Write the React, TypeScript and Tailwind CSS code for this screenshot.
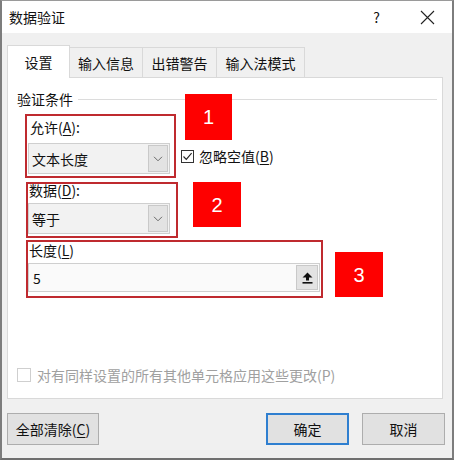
import React from "react";

const Chevron = () => (
  <svg width="10" height="6" viewBox="0 0 10 6">
    <path d="M1 0.8 L5 4.8 L9 0.8" fill="none" stroke="#6a6a6a" strokeWidth="1" />
  </svg>
);

function Combo({ text }: { text: string }) {
  return (
    <div className="flex h-[31px] w-[142px] items-stretch border border-[#cfcfcf] bg-[#f2f2f2]">
      <div className="flex flex-1 items-center pl-[3px] text-[14px] leading-[16px] text-[#111]">{text}</div>
      <div className="my-[1px] mr-[1px] flex w-[20px] items-center justify-center border border-[#c9c9c9] bg-[#e3e3e3]">
        <Chevron />
      </div>
    </div>
  );
}

function RedTag({ n, cls }: { n: string; cls: string }) {
  return (
    <div className={"absolute flex items-center justify-center bg-[#fe0000] font-['Liberation_Sans',Arial,sans-serif] text-[20px] leading-none text-white " + cls}>
      {n}
    </div>
  );
}

export default function App() {
  return (
    <div className="h-[461px] w-[455px] bg-white font-['Noto_Sans_CJK_SC','Noto_Sans',sans-serif] text-[#111]">
      <div className="flex h-[460px] w-[454px] flex-col border-x-2 border-t border-b-2 border-x-[#7d7d7d] border-t-[#9a9a9a] border-b-[#6f6f6f]">
        {/* title bar */}
        <div className="flex h-[32px] items-center bg-white pl-[7px]">
          <span className="text-[14px] leading-[16px]">数据验证</span>
          <span className="ml-auto text-[14px] leading-[16px]">?</span>
          <div className="ml-[40px] mr-[17px] flex items-center">
            <svg width="15" height="15" viewBox="0 0 15 15">
              <path d="M1 1 L14 14 M14 1 L1 14" stroke="#222" strokeWidth="1.1" />
            </svg>
          </div>
        </div>
        {/* body */}
        <div className="flex flex-1 flex-col bg-[#f0f0f0] pl-[5px] pr-[7px]">
          {/* tabs */}
          <div className="mt-[12px] flex h-[32px] items-end">
            <div className="relative z-10 -mb-px flex h-[33px] w-[63px] items-center justify-center border-x border-t border-[#d9d9d9] bg-white text-[14px] leading-[16px]">
              设置
            </div>
            <div className="flex h-[30px] w-[73px] items-center justify-center border-r border-t border-[#d9d9d9] text-[14px] leading-[16px]">
              输入信息
            </div>
            <div className="flex h-[30px] w-[74px] items-center justify-center border-r border-t border-[#d9d9d9] text-[14px] leading-[16px]">
              出错警告
            </div>
            <div className="flex h-[30px] w-[88px] items-center justify-center border-r border-t border-[#d9d9d9] text-[14px] leading-[16px]">
              输入法模式
            </div>
          </div>
          {/* panel */}
          <div className="relative flex h-[322px] w-[436px] flex-col border border-[#d9d9d9] bg-white">
            <div className="mt-[11px] flex h-[20px] items-center pl-[9px] pr-[5px]">
              <span className="text-[14px] leading-[16px]">验证条件</span>
              <div className="ml-[5px] h-px flex-1 bg-[#dcdcdc]" />
            </div>

            {/* row 1 */}
            <div className="mt-[5px] flex items-end">
              <div className="ml-[17px] flex h-[64px] w-[151px] flex-col border-2 border-[#bf2a2f]">
                <div className="flex h-[22px] items-center pl-[3px] text-[14px] leading-[16px]">
                  允许(<u className="underline-offset-2">A</u>):
                </div>
                <div className="ml-px mt-[5px]">
                  <Combo text="文本长度" />
                </div>
              </div>
              <div className="mb-[14px] ml-[5px] flex items-center">
                <div className="flex h-[13px] w-[13px] items-center justify-center border border-[#333] bg-white">
                  <svg width="11" height="11" viewBox="0 0 11 11">
                    <path d="M1.5 5.5 L4.3 8.4 L9.6 2.2" fill="none" stroke="#222" strokeWidth="1.1" />
                  </svg>
                </div>
                <span className="ml-[5px] text-[14px] leading-[16px]">
                  忽略空值(<u className="underline-offset-2">B</u>)
                </span>
              </div>
            </div>

            {/* row 2 */}
            <div className="ml-[18px] mt-[4px] flex h-[56px] w-[152px] flex-col border-2 border-[#bf2a2f]">
              <div className="flex h-[12px] items-center pl-[1px] text-[14px] leading-[16px]">
                数据(<u className="underline-offset-2">D</u>):
              </div>
              <div className="mt-[7px]">
                <Combo text="等于" />
              </div>
            </div>

            {/* row 3 */}
            <div className="ml-[18px] mt-[2px] flex h-[58px] w-[297px] flex-col border-2 border-[#bf2a2f]">
              <div className="flex h-[16px] items-center pl-[1px] text-[14px] leading-[16px]">
                长度(<u className="underline-offset-2">L</u>)
              </div>
              <div className="mt-[5px] flex h-[29px] w-[292px] items-stretch border border-[#cfcfcf] bg-[#fafafa]">
                <div className="flex flex-1 items-center pl-[4px] text-[14px] leading-[16px]">5</div>
                <div className="my-[1px] mr-[1px] flex w-[22px] items-center justify-center border border-[#c9c9c9] bg-[#e3e3e3]">
                  <svg width="11" height="12" viewBox="0 0 11 12">
                    <path d="M5.5 0.5 L10.5 5.5 L7 5.5 L7 8.5 L4 8.5 L4 5.5 L0.5 5.5 Z" fill="#111" />
                    <rect x="0.5" y="10" width="10" height="1.6" fill="#111" />
                  </svg>
                </div>
              </div>
            </div>

            {/* apply to all */}
            <div className="ml-[9px] mt-[69px] flex items-center">
              <div className="h-[14px] w-[14px] border border-[#cfcfcf] bg-white" />
              <span className="ml-[6px] text-[14px] leading-[16px] text-[#a0a0a0]">
                对有同样设置的所有其他单元格应用这些更改(P)
              </span>
            </div>

            <RedTag n="1" cls="left-[177px] top-[16px] h-[46px] w-[47px]" />
            <RedTag n="2" cls="left-[185px] top-[104px] h-[45px] w-[48px]" />
            <RedTag n="3" cls="left-[327px] top-[174px] h-[45px] w-[48px]" />
          </div>

          {/* buttons */}
          <div className="mt-[14px] flex h-[32px] items-stretch">
            <div className="flex w-[92px] items-center justify-center border border-[#adadad] bg-[#e1e1e1] text-[14px] leading-[16px]">
              全部清除(<u className="underline-offset-2">C</u>)
            </div>
            <div className="ml-auto flex w-[83px] items-center justify-center border-2 border-[#2f7fd0] bg-[#e1e1e1] text-[14px] leading-[16px]">
              确定
            </div>
            <div className="ml-[13px] flex w-[83px] items-center justify-center border border-[#adadad] bg-[#e1e1e1] text-[14px] leading-[16px]">
              取消
            </div>
          </div>
        </div>
      </div>
    </div>
  );
}
